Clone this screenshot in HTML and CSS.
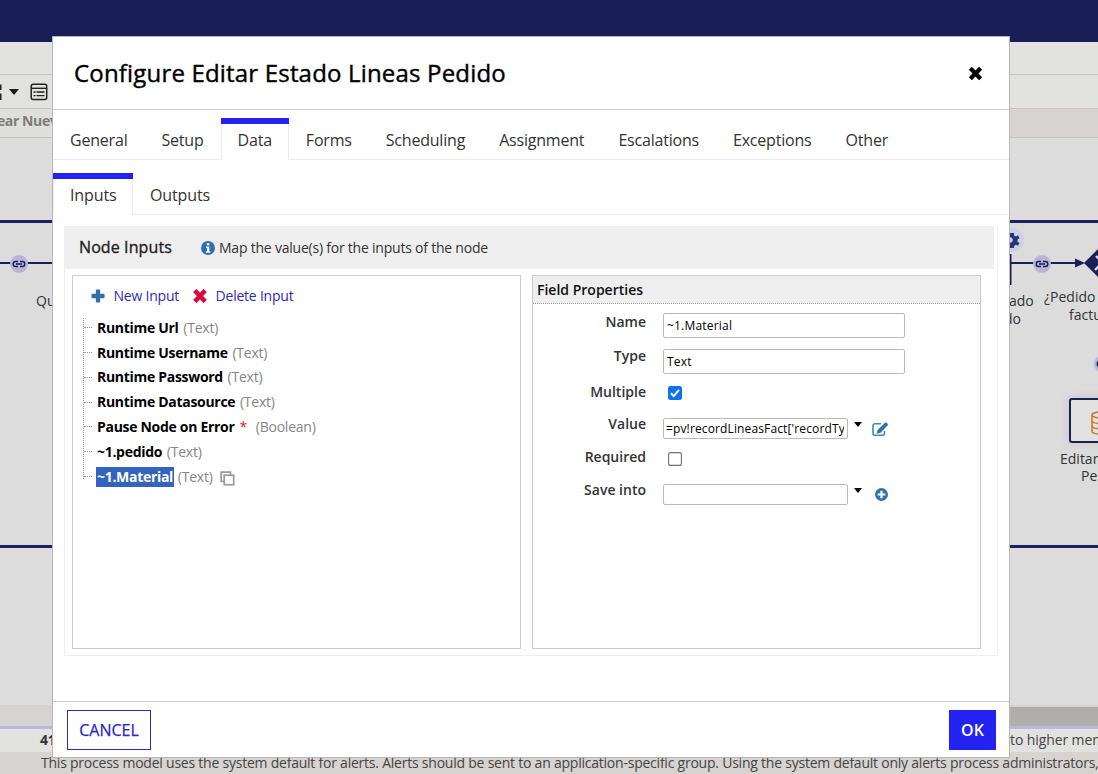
FILE: index.html
```html
<!DOCTYPE html>
<html lang="en">
<head>
<meta charset="utf-8">
<title>Configure Editar Estado Lineas Pedido</title>
<link rel="stylesheet" href="styles.css">
</head>
<body>
<svg class="defs" width="0" height="0" aria-hidden="true">
  <symbol id="link" viewBox="0 0 18 18"><circle cx="9" cy="9" r="9" fill="#b9b5d8"/><path d="M8 6.500H5.700a2.500 2.500 0 0 0 0 5H8M10 6.500h2.300a2.500 2.500 0 0 1 0 5H10M6 9h6" fill="none" stroke="#1b1f55" stroke-width="1.400"/></symbol>
</svg>
<div class="page">
  <div class="topbar"></div>
  <div class="menubar"></div>
  <div class="toolbar">
    <svg width="52" height="33" viewBox="0 0 52 33"><path d="M0 9.500h1.500v5.500H0zM0 18.500h1.500V25H0z" fill="#222"/><path d="M9 14h10l-5 6z" fill="#1a1a1a"/><rect x="31.200" y="9.200" width="15.500" height="15.300" rx="2" fill="none" stroke="#222" stroke-width="1.500"/><path d="M31 13.300h16" stroke="#222" stroke-width="1.400"/><path d="M33.500 17h2M36.500 17h8M33.500 20.700h2M36.500 20.700h8" stroke="#222" stroke-width="1.300"/></svg>
  </div>
  <div class="crumbs"><span class="doc-tab">ear Nuev</span></div>
  <div class="canvas">
    <div class="lane lane-top"></div>
    <div class="lane lane-bottom"></div>
    <div class="edge edge-left"></div>
    <svg class="node link-left" width="18" height="18"><use href="#link"/></svg>
    <span class="node cap-left">Qu</span>
    <svg class="node flow-right" width="90" height="70" viewBox="1008 226 90 70">
      <circle cx="1012" cy="240" r="12" fill="#cfd0e4"/>
      <path d="M1010 233h4v2.500l2 1 2-1.200 1.500 3-2 1.200v2.200l2 1.300-1.500 2.800-2-1-2 1.200v2h-4z" fill="#27357c"/><circle cx="1010" cy="240" r="2.700" fill="#cfd0e4"/>
      <path d="M1010.500 254v31M1010 263h67" stroke="#1a1f57" stroke-width="2" fill="none"/>
      <path d="M1075 258.500l10 4.500-10 4.500z" fill="#1a1f57"/>
      <path d="M1084 263l18-18v36z" fill="#1a1f57"/>
      <path d="M1096 256l4 4M1095 270l4-4" stroke="#d8d8e2" stroke-width="2.400"/>
    </svg>
    <svg class="node link-right" width="18" height="18"><use href="#link"/></svg>
    <svg class="node link-low" width="18" height="18"><use href="#link"/></svg>
    <span class="node cap-a">ado</span>
    <span class="node cap-b">do</span>
    <span class="node cap-c">¿Pedido</span>
    <span class="node cap-d">factu</span>
    <div class="node task"><svg width="20" height="24" viewBox="0 0 20 24" fill="none" stroke="#cf7c34" stroke-width="1.600"><ellipse cx="9" cy="4" rx="8" ry="3"/><path d="M1 4v16c0 4 16 4 16 0V4M1 9.500c0 4 16 4 16 0M1 14.700c0 4 16 4 16 0"/></svg></div>
    <span class="node cap-e">Editar</span>
    <span class="node cap-f">Pe</span>
  </div>
  <div class="scrollbar"><div class="thumb"></div></div>
  <div class="metric"><b>41</b><span>to higher mem</span></div>
  <div class="notice">This process model uses the system default for alerts. Alerts should be sent to an application-specific group. Using the system default only alerts process administrators,</div>
</div>

<div class="dialog">
  <div class="dialog-head">
    <h1>Configure Editar Estado Lineas Pedido</h1>
    <svg width="15" height="15" viewBox="0 0 14 14"><path d="M2.200 2.200l9.600 9.600M11.800 2.200l-9.600 9.600" stroke="#000" stroke-width="4"/></svg>
  </div>
  <div class="tabs main-tabs">
    <span class="tab">General</span><span class="tab">Setup</span><span class="tab on">Data</span><span class="tab">Forms</span><span class="tab">Scheduling</span><span class="tab">Assignment</span><span class="tab">Escalations</span><span class="tab">Exceptions</span><span class="tab">Other</span>
  </div>
  <div class="tabs sub-tabs">
    <span class="tab on">Inputs</span><span class="tab">Outputs</span>
  </div>
  <div class="panel">
    <div class="panel-head">
      <h2>Node Inputs</h2>
      <svg width="14" height="14" viewBox="0 0 14 14"><circle cx="7" cy="7" r="7" fill="#2f6fab"/><path d="M5.800 2.300h2.500v2H5.800zM5 5.500h3.300v4.700h1v1.500H5v-1.500h1V7H5z" fill="#fff"/></svg>
      <span>Map the value(s) for the inputs of the node</span>
    </div>
    <div class="columns">
      <div class="box">
        <div class="actions">
          <svg width="14" height="14" viewBox="0 0 14 14"><path d="M7 .5v13M.5 7h13" stroke="#2f6fab" stroke-width="4.300"/></svg>
          <span class="new">New Input</span>
          <svg width="14" height="14" viewBox="0 0 14 14"><path d="M1.800 1.500l10.400 11M12.200 1.500l-10.400 11" stroke="#d8083c" stroke-width="4.600"/></svg>
          <span>Delete Input</span>
        </div>
        <ul class="tree">
          <li><b>Runtime Url</b><i>(Text)</i></li>
          <li><b>Runtime Username</b><i>(Text)</i></li>
          <li><b>Runtime Password</b><i>(Text)</i></li>
          <li><b>Runtime Datasource</b><i>(Text)</i></li>
          <li><b>Pause Node on Error</b><em>*</em><i>(Boolean)</i></li>
          <li><b>~1.pedido</b><i>(Text)</i></li>
          <li><b class="selected">~1.Material</b><i>(Text)</i><svg width="15" height="15" viewBox="0 0 15 15" fill="none" stroke="#9a9a9a" stroke-width="1.700"><path d="M4 10.500H1.200V1.200h9.300V4"/><rect x="4.200" y="4.200" width="9.500" height="9.500" fill="#fff"/></svg></li>
        </ul>
      </div>
      <div class="box">
        <h3>Field Properties</h3>
        <div class="form">
          <div class="row tall"><label class="first">Name</label><span class="input wide">~1.Material</span></div>
          <div class="row tall"><label class="upper">Type</label><span class="input wide">Text</span></div>
          <div class="row"><label class="upper">Multiple</label><svg class="check" width="14" height="14" viewBox="0 0 14 14"><rect width="14" height="14" rx="2.500" fill="#0b72f5"/><path d="M3 7.300l2.700 2.800L11 3.800" fill="none" stroke="#fff" stroke-width="2"/></svg></div>
          <div class="row"><label>Value</label><span class="input"><span class="clip">=pv!recordLineasFact['recordTy</span></span><svg class="caret" width="8" height="5"><path d="M0 0h8L4 5z"/></svg><svg class="edit" width="17" height="15" viewBox="0 0 17 15"><path d="M9 1.700H3A2 2 0 0 0 1 3.700v7.600a2 2 0 0 0 2 2h7.500a2 2 0 0 0 2-2V9" fill="none" stroke="#4288bd" stroke-width="1.600"/><path d="M5.500 8l7.500-7.300c1.200-.9 3.700 1.300 2.700 2.600L8.700 10.800l-4 1z" fill="#2f74ad"/></svg></div>
          <div class="row"><label>Required</label><svg class="check" width="14" height="14" viewBox="0 0 14 14"><rect x=".6" y=".6" width="12.800" height="12.800" rx="2" fill="#fff" stroke="#707070" stroke-width="1.100"/></svg></div>
          <div class="row"><label>Save into</label><span class="input"></span><svg class="caret" width="8" height="5"><path d="M0 0h8L4 5z"/></svg><svg class="add" width="13" height="13" viewBox="0 0 13 13"><circle cx="6.500" cy="6.500" r="6.500" fill="#2f74ad"/><path d="M6.500 2.700v7.600M2.700 6.500h7.600" stroke="#fff" stroke-width="2.200"/></svg></div>
        </div>
      </div>
    </div>
  </div>
  <div class="dialog-foot"><button class="cancel">CANCEL</button><button class="ok">OK</button></div>
</div>
</body>
</html>
```
FILE: styles.css
```css
* { box-sizing: border-box; }
body { margin: 0; width: 1098px; height: 774px; overflow: hidden; position: relative; font: 14px/20px "Open Sans", "Noto Sans", sans-serif; letter-spacing: -.22px; color: #333; }
svg { display: block; flex: none; }
.defs { position: absolute; }
h1, h2, h3, ul { margin: 0; padding: 0; }

.page { height: 774px; display: flex; flex-direction: column; background: #dcdcdc; white-space: nowrap; overflow: hidden; }
.topbar { height: 42px; background: #191e56; }
.menubar { height: 33px; background: #e2e2e0; border-bottom: 1px solid #c4c4c4; }
.toolbar { height: 34px; background: #e2e2e0; border-bottom: 1px solid #c4c4c4; }
.crumbs { height: 29px; background: #d7d3d2; border-bottom: 1px solid #c4c4c4; }
.doc-tab { display: block; width: 100px; height: 28px; line-height: 24px; background: #dfdfdd; color: #7c7c7a; font-weight: 700; text-indent: -3px; letter-spacing: -.4px; }
.canvas { position: relative; height: 567px; overflow: hidden; }
.lane { position: absolute; left: 0; right: 0; height: 3px; background: #1c2260; }
.lane-top { top: 82px; }
.lane-bottom { top: 407px; }
.edge-left { position: absolute; left: 0; top: 124px; width: 60px; height: 2px; background: #1a1f57; }
.node { position: absolute; letter-spacing: 0; }
.link-left { left: 10px; top: 117px; }
.link-right { left: 1033px; top: 117px; }
.link-low { left: 1094px; top: 217px; }
.flow-right { left: 1008px; top: 88px; }
.cap-left { left: 36px; top: 153px; }
.cap-a { left: 1009px; top: 153px; }
.cap-b { left: 1004px; top: 171px; }
.cap-c { left: 1044px; top: 149px; }
.cap-d { left: 1069px; top: 167px; }
.cap-e { left: 1060px; top: 311px; }
.cap-f { left: 1081px; top: 328px; }
.task { left: 1069px; top: 260px; width: 60px; height: 45px; padding: 11px 0 0 20px; border: 2px solid #1a1f57; border-radius: 3px; background: #e2e2e0; box-shadow: 0 0 10px #c8c4c8; }
.scrollbar { height: 24px; background: #d7d3d2; border-bottom: 3px solid #b9b7dc; padding-top: 2px; display: flex; justify-content: flex-end; }
.thumb { width: 800px; height: 19px; background: #afaeac; }
.metric { height: 23px; background: #e2e2e0; display: flex; line-height: 22px; padding-left: 40px; }
.metric b { flex: none; width: 970px; }
.metric span { letter-spacing: -.1px; color: #454545; }
.notice { flex: 1; background: #d6d3d1; padding-left: 41px; line-height: 22px; letter-spacing: -.228px; color: #454545; }

.dialog { position: absolute; left: 52px; top: 36px; width: 958px; height: 722px; background: #fff; border: 1px solid #b8b8bc; display: flex; flex-direction: column; }
.dialog-head { height: 73px; border-bottom: 1px solid #ccc; display: flex; align-items: center; justify-content: space-between; padding: 0 26px 0 21px; }
.dialog-head h1 { font-size: 24px; line-height: 34px; font-weight: 400; letter-spacing: .18px; -webkit-text-stroke: .4px #000; color: #000; }
.tabs { display: flex; height: 42px; border-bottom: 1px solid #ececec; font-size: 16px; letter-spacing: -.2px; color: #333; }
.tab { height: 42px; padding: 11px 17px 0; line-height: 22px; }
.tab.on { border-top: 6px solid #2322f0; padding: 5px 17px 0; background: linear-gradient(#ececec, #ececec) left / 1px 100% no-repeat, linear-gradient(#ececec, #ececec) right / 1px 100% no-repeat, #fff; }
.main-tabs { margin-top: 8px; }
.sub-tabs { margin-top: 13px; letter-spacing: -.12px; }
.sub-tabs .on { width: 80px; }
.panel { margin: 11px 11px 0; height: 430px; border: 1px solid #eee; border-top: 0; }
.panel-head { width: 930px; height: 43px; margin-left: -1px; background: #efefef; display: flex; align-items: center; padding-left: 15px; }
.panel-head h2 { width: 122px; font-size: 16px; font-weight: 400; letter-spacing: .1px; -webkit-text-stroke: .35px #222; color: #222; padding-bottom: 1px; }
.panel-head svg { margin-right: 4px; }
.columns { display: flex; gap: 11px; padding: 6px 0 0 7px; }
.box { width: 449px; height: 374px; border: 1px solid #ccc; }
.actions { display: flex; align-items: center; padding: 10px 0 0 18px; color: #302bb8; }
.actions svg { margin-right: 8.500px; }
.actions .new { margin-right: 14px; }
.actions svg + span { white-space: nowrap; }
.tree { list-style: none; margin: 12px 0 0 10px; height: 161px; border-left: 1px dotted #999; }
.tree li { display: flex; align-items: center; height: 24.800px; color: #000; position: relative; top: -2.600px; }
.tree li::before { content: ""; width: 8px; border-top: 1px dotted #999; margin-right: 4px; }
.tree b { font-weight: 700; padding: 0 1px; letter-spacing: -.3px; }
.tree i { font-style: normal; color: #858585; margin-left: 3.700px; }
.tree em { font-style: normal; color: #d22; margin: 0 5px 0 4px; }
.tree .selected { background: #3463bd; color: #fff; height: 20px; }
.tree svg { margin: 3px 0 0 7px; }
.box h3 { height: 28px; background: #eee; border-bottom: 1px dotted #999; font: 600 14px/27px "Open Sans", sans-serif; letter-spacing: 0; color: #111; padding-left: 4px; }
.form { padding-top: 9px; }
.row { display: flex; align-items: flex-start; height: 33px; }
.row.tall { height: 36px; }
.row label { width: 113px; text-align: right; font-weight: 600; letter-spacing: 0; margin: -4px 17px 0 0; }
.row .first { margin-top: -1px; }
.row .upper { margin-top: -3px; }
.input { width: 185px; height: 21px; border: 1px solid #bbb; border-radius: 2px; padding: 0 3px 0 2px; font-size: 12px; line-height: 20px; color: #000; letter-spacing: .13px; }
.clip { display: block; overflow: hidden; white-space: nowrap; }
.input.wide { width: 242px; height: 25px; padding-left: 3px; line-height: 24px; letter-spacing: .2px; }
.check { margin: 1px 0 0 5px; }
.caret { margin: 4px 9px 0 6px; }
.edit { margin: 4px 0 0 1px; }
.add { margin: 4px 0 0 3.500px; }
.dialog-foot { margin-top: auto; height: 56px; border-top: 1px solid #ccc; padding: 8px 13px 0 14px; display: flex; justify-content: space-between; }
button { height: 40px; font: 400 16px/22px "Open Sans", sans-serif; -webkit-text-stroke: .25px; border: 1px solid #2322f0; background: #fff; color: #2924cf; padding: 0; }
.cancel { width: 84px; border-color: #302bb8; }
.ok { width: 47px; background: #2322f0; color: #fff; font-weight: 600; -webkit-text-stroke: 0; }
```
